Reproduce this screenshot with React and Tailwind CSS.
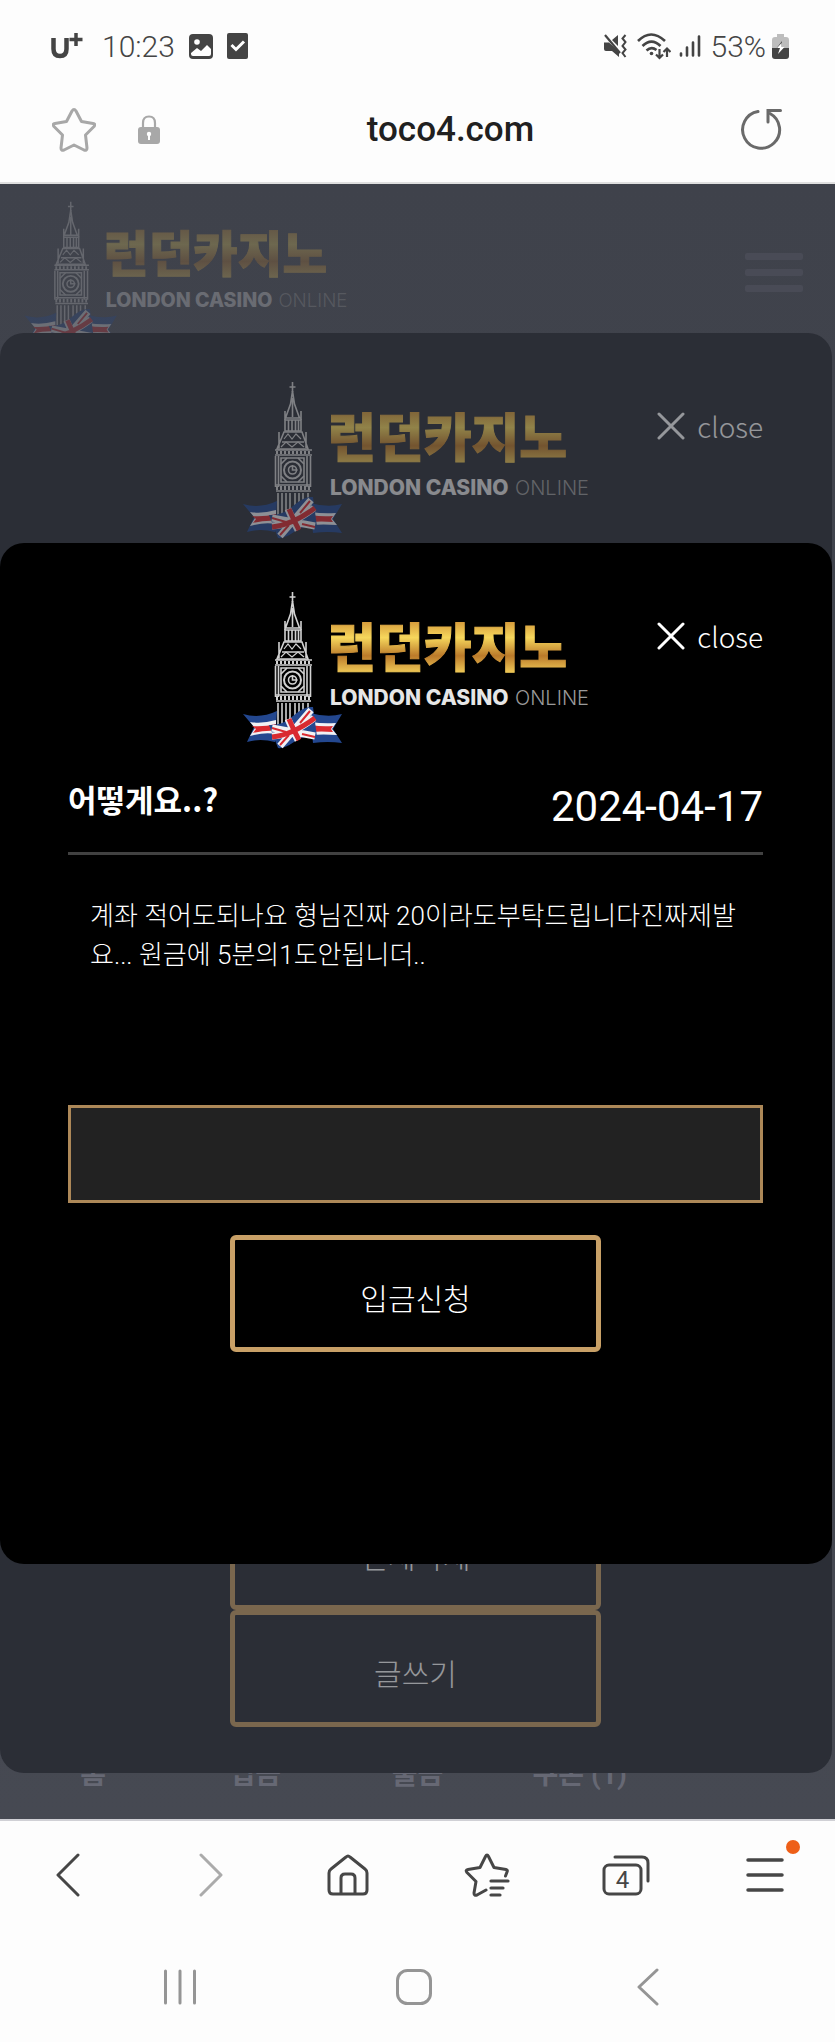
import React from 'react'

const tabs = ['홈', '입금', '출금', '쿠폰 (1)']

function Logo({ id, className }) {
  const gold = `${id}-gold`
  return (
    <svg viewBox="0 0 350 165" role="img" aria-label="런던카지노 London Casino Online" className={className}>
      <defs>
        <linearGradient id={gold} gradientUnits="userSpaceOnUse" x1="0" y1="34" x2="0" y2="86">
          <stop offset="0" stopColor="#d69c3c" />
          <stop offset="0.3" stopColor="#f6d75c" />
          <stop offset="0.65" stopColor="#bb7a2a" />
          <stop offset="1" stopColor="#f3cf5a" />
        </linearGradient>
      </defs>

      {/* clock tower */}
      <g fill="none" stroke="#d2d2d2" strokeWidth="1.6">
        <path d="M51.5 4v10M48.5 9h6" />
        <path d="M51.5 13l-2 13-5 14h14l-5-14zM51.5 20v19M44 33v9M60 33v9" />
        <path d="M44 42h16v11H44zM47.500 42v11M51 42v11M54.500 42v11M57.500 42v11" />
        <path d="M43 54h18l6 17H36zM38 54v16M65 54v16M41 64h22" />
        <path d="M43 61l4-5 4 5 4-5 5 5M40 69l5-5 6 5 6-5 6 5" strokeWidth="1.2" />
        <path d="M34 72h37M34 77h37" />
        <path d="M35 74.500h35" strokeWidth="3" strokeDasharray="2 2" />
        <path d="M34.500 78v31M37.500 78v31M66 78v31M69.500 78v31" />
        <path d="M40 80h23v24H40z" />
        <path d="M40 86l6-6M57 80l6 6M40 98l6 6M57 104l6-6" />
        <circle cx="51.500" cy="92" r="8.500" strokeWidth="2" />
        <circle cx="51.500" cy="92" r="4" />
        <path d="M51.500 87v5h5" />
        <path d="M35 107h35M35 113h35" />
        <path d="M35 110h35" strokeWidth="4" strokeDasharray="2 2" />
        <path d="M37 115v22M41 115v22M45 115v22M49 115v22M54 115v22M58 115v22M62 115v22M67 115v22" />
      </g>

      {/* union jack ribbon */}
      <path d="M2 126q17 5 34-3l-2 31q-15-4-28 0l7-15z" fill="#23478f" />
      <path d="M9 134q12 2 26-2v14q-12-2-26 2l5-8z" fill="#f1f1f4" />
      <path d="M11 138q12 1 24-2v7q-11-1-23 2l3-4z" fill="#d92a30" />
      <path d="M101 126q-14 4-32-1l3 30q15-2 29 0l-9-14z" fill="#23478f" />
      <path d="M95 135q-13 1-25-1v13q12-1 26 0l-5-6z" fill="#f1f1f4" />
      <path d="M92 138q-11 1-22-1v7q10-1 22 0l-2-3z" fill="#d92a30" />
      <path d="M28 137q13 1 24-9t20-9l4 30q-13-2-23 5t-16 6z" fill="#23478f" />
      <path d="M31 148q20-1 42-18M47 131q5 12 10 21M31 140l43 8M39 158l31-36" fill="none" stroke="#f1f1f4" strokeWidth="7" />
      <path d="M31 149q20-2 43-19M48 131q5 12 10 21" fill="none" stroke="#d92a30" strokeWidth="5" />
      <path d="M31 140l14 4M39 157l9-10M59 135l10-12M61 146l13 3" fill="none" stroke="#d92a30" strokeWidth="2" />

      <text x="87" y="79" fontSize="52" fontWeight="900" fill={`url(#${gold})`} stroke={`url(#${gold})`} strokeWidth="1" className="font-['Noto_Sans_CJK_KR',sans-serif]">
        런던카지노
      </text>
      <text x="89" y="117" fontSize="21" fontWeight="800" fill="#e6e6e6" className="font-['Inter',sans-serif]">
        LONDON CASINO
      </text>
      <text x="274" y="117" fontSize="20" fontWeight="300" fill="#9a9a9a" className="font-['Inter',sans-serif]">
        ONLINE
      </text>
    </svg>
  )
}

function ModalHeader({ id }) {
  return (
    <header className="grid grid-cols-[1fr_350px_1fr] items-start">
      <Logo id={id} className="col-start-2 h-[165px] w-[350px]" />
      <button type="button" className="mt-7 flex h-10 items-center gap-3 justify-self-end text-[28px] leading-10 font-light">
        <svg viewBox="0 0 28 28" className="size-7" fill="none" stroke="currentColor" strokeWidth="3" strokeLinecap="round" aria-hidden="true">
          <path d="M2 2l24 24M26 2L2 26" />
        </svg>
        close
      </button>
    </header>
  )
}

function GoldButton({ children }) {
  return (
    <button type="button" className="mx-auto block h-[117px] w-[371px] rounded-md border-5 border-[#c8a067] pt-2 text-[30px] font-light">
      {children}
    </button>
  )
}

function StatusBar() {
  return (
    <div className="flex h-[92px] items-center justify-between pr-[46px] pl-[50px] font-['Roboto',sans-serif] text-[30px] text-[#444]">
      <div className="flex items-center gap-3.5">
        <svg viewBox="0 0 34 28" className="mr-1 h-7 w-[34px]" fill="none" stroke="currentColor" aria-label="U+">
          <path d="M3.500 6v11q0 7 6.500 7t6.500-7V6" strokeWidth="4.500" />
          <path d="M26 1v13M19.500 7.500h13" strokeWidth="3.500" />
        </svg>
        <span className="font-light">10:23</span>
        <svg viewBox="0 0 24 25" className="h-[25px] w-6" aria-hidden="true">
          <rect width="24" height="25" rx="4" fill="currentColor" />
          <circle cx="8" cy="8" r="2.800" fill="#fff" />
          <path d="M2 19l6-5 4 3 6-6 4 4v5q0 2-2 2H4q-2 0-2-2z" fill="#fff" />
        </svg>
        <svg viewBox="0 0 21 26" className="h-[26px] w-[21px]" aria-hidden="true">
          <rect width="21" height="26" rx="2" fill="currentColor" />
          <path d="M4.500 12l4.500 4.500 8-8" fill="none" stroke="#fff" strokeWidth="3" />
        </svg>
      </div>
      <div className="flex items-center">
        <svg viewBox="0 0 24 24" className="mr-2.5 size-6" fill="currentColor" aria-hidden="true">
          <path d="M1 8.500h5l10 9V23l-7-6H3q-2 0-2-2zM9 6l6-5v11z" />
          <path d="M2 1l15 18" stroke="currentColor" strokeWidth="2.200" />
          <path d="M22.500 1l-3 3.500 3 3.500-3 4 3 3.500-3 3.500 3 4" fill="none" stroke="currentColor" strokeWidth="2" />
        </svg>
        <svg viewBox="0 0 34 27" className="mr-2 h-[27px] w-[34px]" fill="none" stroke="currentColor" strokeWidth="2.600" aria-hidden="true">
          <path d="M1 8q13-13 27 0M5.500 13q9-9 18 0M9.500 17.500q5-4.500 10-0.500" />
          <circle cx="14.500" cy="20.500" r="1.800" fill="currentColor" stroke="none" />
          <path d="M22.500 16v9M19 21.500l3.500 3.500 3.500-3.500M30 24v-8M26.500 19l3.500-3.500 3.500 3.500" strokeWidth="2.200" />
        </svg>
        <svg viewBox="0 0 22 24" className="mr-2.5 h-6 w-[22px]" fill="none" stroke="currentColor" strokeWidth="2.600" strokeLinecap="round" aria-hidden="true">
          <path d="M2 19.500v2M8 13.500v8M14 8.500v13M20 2.500v19" />
        </svg>
        <span className="mr-1.5 font-light">53%</span>
        <svg viewBox="0 0 17 25" className="h-[25px] w-[17px]" aria-hidden="true">
          <path d="M5 0h7v3h2q3 0 3 3v8H0V6q0-3 3-3h2z" fill="#bdbdbd" />
          <path d="M0 14h17v8q0 3-3 3H3q-3 0-3-3z" fill="currentColor" />
          <path d="M10 7l-6 8h5z" fill="currentColor" />
          <path d="M6 20l6.500-7H9.500V9L5 14h3z" fill="#fff" />
        </svg>
      </div>
    </div>
  )
}

function AddressBar() {
  return (
    <div className="flex h-[92px] items-start justify-between border-b-2 border-[#dfdfdf] px-[52px] pt-4 font-['Roboto',sans-serif]">
      <div className="flex items-center gap-[42px] text-[#a8a8a8]">
        <button type="button" aria-label="즐겨찾기">
          <svg viewBox="0 0 44 44" className="size-11" fill="none" stroke="currentColor" strokeWidth="3" strokeLinejoin="round">
            <path d="M20 3q2-3 4 0l5.500 10.500 11.500 2q3 .5 1 3l-8.500 8.500 1.500 13q0 3-3 2l-10-5-10 5q-3 1-3-2l1.500-13L2 18.500q-2-2.500 1-3l11.500-2z" />
          </svg>
        </button>
        <svg viewBox="0 0 22 30" className="h-[30px] w-[22px]" aria-hidden="true">
          <path d="M5 13V8q0-6.500 6-6.500T17 8v5" fill="none" stroke="currentColor" strokeWidth="2.200" />
          <rect y="12" width="22" height="17" rx="3" fill="currentColor" />
          <path d="M11 20v5" stroke="#fff" strokeWidth="2" />
          <circle cx="11" cy="19" r="2.200" fill="#fff" />
        </svg>
      </div>
      <span className="text-[35px] leading-[44px] font-medium text-[#202020]">toco4.com</span>
      <button type="button" aria-label="새로고침" className="text-[#6a6a6a]">
        <svg viewBox="0 0 42 42" className="size-[42px]" fill="none" stroke="currentColor" strokeWidth="3" strokeLinecap="round">
          <path d="M17 3.500A18.500 18.500 0 1 0 29 5.500" />
          <path d="M39.500 2.500H27V14" />
        </svg>
      </button>
    </div>
  )
}

function SitePage() {
  return (
    <div className="col-start-1 row-start-1 flex flex-col justify-between bg-linear-to-b from-[#3f424b] to-[#464952]">
      <header className="flex items-start justify-between pt-3.5 pr-8 pl-[22px]">
        <Logo id="site" className="h-[154px] w-[328px] opacity-25" />
        <button type="button" aria-label="메뉴" className="mt-[55px] flex w-[58px] flex-col gap-[9px]">
          <span className="h-[7px] rounded-xs bg-[#494b56]" />
          <span className="h-[7px] rounded-xs bg-[#494b56]" />
          <span className="h-[7px] rounded-xs bg-[#494b56]" />
        </button>
      </header>
      <nav className="grid grid-cols-5 px-3 pb-6 text-center font-['Roboto','Noto_Sans_CJK_KR',sans-serif] text-[28px] leading-10 font-bold text-[#666874]">
        {tabs.map((tab) => (
          <a key={tab} href="#">{tab}</a>
        ))}
      </nav>
    </div>
  )
}

function InboxModal() {
  return (
    <section className="z-10 col-start-1 row-start-1 mt-[149px] mr-[3px] mb-[46px] flex rounded-3xl bg-[#2b2e36] text-white">
      <div className="flex flex-1 flex-col pt-[45px] pr-[69px] pb-[46px] pl-[68px] opacity-50">
        <ModalHeader id="inbox" />
        <div className="mt-auto">
          <GoldButton>전체삭제</GoldButton>
          <GoldButton>글쓰기</GoldButton>
        </div>
      </div>
    </section>
  )
}

function MessageModal() {
  return (
    <section className="z-20 col-start-1 row-start-1 mt-[359px] mr-[3px] self-start rounded-3xl bg-black pt-[45px] pr-[69px] pb-[212px] pl-[68px] text-white">
      <ModalHeader id="message" />
      <div className="mt-4 flex h-[86px] items-start justify-between border-b-3 border-[#414141]">
        <h2 className="text-[31px] leading-[60px] font-bold">어떻게요..?</h2>
        <time dateTime="2024-04-17" className="font-['Roboto',sans-serif] text-[42px] leading-[76px]">2024-04-17</time>
      </div>
      <p className="mt-[42px] h-52 px-[22px] font-['Roboto','Noto_Sans_CJK_KR',sans-serif] text-[26px] leading-[39px] font-light">
        계좌 적어도되나요 형님진짜 20이라도부탁드립니다진짜제발요... 원금에 5분의1도안됩니더..
      </p>
      <input type="text" aria-label="답장" className="mb-8 block h-[98px] w-full border-3 border-[#ad8858] bg-[#222] px-4 text-[26px]" />
      <GoldButton>입금신청</GoldButton>
    </section>
  )
}

function BrowserBar() {
  return (
    <nav className="grid h-[111px] grid-cols-6 place-items-center border-t-2 border-[#d0d0d5] pb-0.5 font-['Roboto',sans-serif] text-[#464646]">
      <button type="button" aria-label="뒤로">
        <svg viewBox="0 0 28 44" className="h-11 w-7" fill="none" stroke="currentColor" strokeWidth="3" strokeLinecap="round" strokeLinejoin="round">
          <path d="M22 2L2 22l20 20" />
        </svg>
      </button>
      <button type="button" aria-label="앞으로" className="text-[#ababab]">
        <svg viewBox="0 0 28 44" className="h-11 w-7" fill="none" stroke="currentColor" strokeWidth="3" strokeLinecap="round" strokeLinejoin="round">
          <path d="M6 2l20 20L6 42" />
        </svg>
      </button>
      <button type="button" aria-label="홈">
        <svg viewBox="0 0 42 42" className="size-[42px]" fill="none" stroke="currentColor" strokeWidth="3" strokeLinejoin="round">
          <path d="M19 3q2-2 4 0l15 12q2 1.500 2 4v17q0 4-4 4H6q-4 0-4-4V19q0-2.500 2-4z" />
          <path d="M14 40V24q0-4 4-4h6q4 0 4 4v16" />
        </svg>
      </button>
      <button type="button" aria-label="북마크">
        <svg viewBox="0 0 46 44" className="h-11 w-[46px]" fill="none" stroke="currentColor" strokeWidth="3" strokeLinecap="round" strokeLinejoin="round">
          <path d="M41.500 23l1.500-4q1-2-1-2.500l-12-2-5.500-11q-1.500-3-3 0L16 14.500l-12 2q-3 .5-1 3l9 9L10 40q0 3 3 2l9-5" />
          <path d="M27 28h17M27 35h12M27 42h9" strokeWidth="3.200" />
        </svg>
      </button>
      <button type="button" aria-label="탭 4개">
        <svg viewBox="0 0 48 42" className="h-[42px] w-12" fill="none" stroke="currentColor" strokeWidth="3" strokeLinecap="round">
          <rect x="2" y="11" width="37" height="29" rx="5" />
          <path d="M13 3h27q6 0 6 6v18" />
          <text x="20.500" y="34" textAnchor="middle" fontSize="24" fill="currentColor" stroke="none">4</text>
        </svg>
      </button>
      <button type="button" aria-label="메뉴" className="relative">
        <svg viewBox="0 0 38 36" className="h-9 w-[38px]" stroke="currentColor" strokeWidth="3.500" strokeLinecap="round">
          <path d="M2 3h34M2 18h34M2 33h34" />
        </svg>
        <span className="absolute -top-[17px] -right-4 size-3.5 rounded-full bg-[#ee5f18]" />
      </button>
    </nav>
  )
}

function SystemBar() {
  return (
    <nav className="grid h-28 grid-cols-3 place-items-center pt-0.5 pr-[70px] pl-[63px] text-[#959595]">
      <button type="button" aria-label="최근 앱">
        <svg viewBox="0 0 34 36" className="h-9 w-[34px]" stroke="currentColor" strokeWidth="3" strokeLinecap="round">
          <path d="M2.500 2v32M17 2v32M31.500 2v32" />
        </svg>
      </button>
      <button type="button" aria-label="홈 화면">
        <svg viewBox="0 0 36 36" className="size-9" fill="none" stroke="currentColor" strokeWidth="3">
          <rect x="1.500" y="1.500" width="33" height="33" rx="10" />
        </svg>
      </button>
      <button type="button" aria-label="이전">
        <svg viewBox="0 0 24 38" className="h-[38px] w-6" fill="none" stroke="currentColor" strokeWidth="3" strokeLinecap="round" strokeLinejoin="round">
          <path d="M21 2L3 19l18 17" />
        </svg>
      </button>
    </nav>
  )
}

export default function App() {
  return (
    <div className="flex min-h-screen flex-col bg-[#fdfdfd] font-['Noto_Sans_CJK_KR',sans-serif]">
      <StatusBar />
      <AddressBar />
      <main className="grid flex-1">
        <SitePage />
        <InboxModal />
        <MessageModal />
      </main>
      <BrowserBar />
      <SystemBar />
    </div>
  )
}
